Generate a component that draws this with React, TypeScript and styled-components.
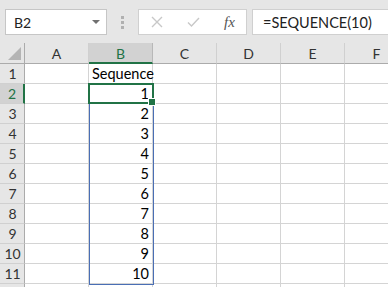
import React from 'react';
import styled, { createGlobalStyle } from 'styled-components';

const GlobalStyle = createGlobalStyle`
  html, body {
    margin: 0;
    padding: 0;
    background: #ffffff;
    overflow: hidden;
  }
  * { box-sizing: border-box; }
`;

const GREEN = '#217346';
const GRID = '#d4d4d4';

const Page = styled.div`
  width: 388px;
  height: 287px;
  font-family: Lato, "Open Sans", sans-serif;
  overflow: hidden;
`;

const Toolbar = styled.div`
  height: 43px;
  background: #e6e6e6;
  display: flex;
  align-items: flex-start;
  padding: 9px 0 0 5px;
`;

const NameBox = styled.div`
  width: 102px;
  height: 26px;
  background: #fff;
  border: 1px solid #c6c6c6;
  display: flex;
  align-items: center;
  justify-content: space-between;
  padding: 0 6px 0 8px;
  font-size: 14px;
  color: #222;
`;

const DropArrow = styled.span`
  width: 0;
  height: 0;
  border-left: 4px solid transparent;
  border-right: 4px solid transparent;
  border-top: 4px solid #707070;
`;

const Dots = styled.div`
  width: 31px;
  height: 26px;
  display: flex;
  flex-direction: column;
  align-items: center;
  justify-content: center;
  gap: 2px;

  & > span {
    width: 3px;
    height: 3px;
    background: #b0b0b0;
  }
`;

const ButtonBox = styled.div`
  width: 109px;
  height: 26px;
  background: #fff;
  border: 1px solid #d0d0d0;
  display: flex;
  align-items: center;
  padding-left: 12px;
  gap: 24px;
`;

const Fx = styled.span`
  font-family: "Liberation Serif", serif;
  font-style: italic;
  font-size: 15px;
  color: #555;
`;

const FormulaBox = styled.div`
  flex: 1;
  height: 26px;
  margin-left: 5px;
  background: #fff;
  border: 1px solid #d0d0d0;
  border-right: none;
  display: flex;
  align-items: center;
  padding-left: 10px;
  font-size: 14.5px;
  color: #222;
`;

const Sheet = styled.div`
  position: relative;
  display: grid;
  grid-template-columns: 25px repeat(6, 64px);
  grid-template-rows: 21px repeat(12, 20px);
`;

const Corner = styled.div`
  background: #e6e6e6;
  border-right: 1px solid #ababab;
  border-bottom: 1px solid #ababab;
  position: relative;

  &::after {
    content: '';
    position: absolute;
    right: 3px;
    bottom: 3px;
    width: 0;
    height: 0;
    border-left: 13px solid transparent;
    border-bottom: 13px solid #b4b4b4;
  }
`;

const ColHead = styled.div<{ $active?: boolean }>`
  background: ${p => (p.$active ? '#d2d2d2' : '#e6e6e6')};
  border-right: 1px solid ${p => (p.$active ? '#b8b8b8' : '#d0d0d0')};
  border-bottom: ${p => (p.$active ? `2px solid ${GREEN}` : '1px solid #ababab')};
  color: ${p => (p.$active ? GREEN : '#333')};
  font-size: 14px;
  display: flex;
  align-items: center;
  justify-content: center;
  padding-top: 1px;
`;

const RowHead = styled.div<{ $active?: boolean }>`
  background: ${p => (p.$active ? '#d2d2d2' : '#e6e6e6')};
  border-right: ${p => (p.$active ? `2px solid ${GREEN}` : '1px solid #ababab')};
  border-bottom: 1px solid #d0d0d0;
  color: ${p => (p.$active ? GREEN : '#333')};
  font-size: 14px;
  display: flex;
  align-items: center;
  justify-content: center;
  padding-left: 1px;
`;

const Cell = styled.div<{ $align?: 'left' | 'right' }>`
  position: relative;
  border-right: 1px solid ${GRID};
  border-bottom: 1px solid ${GRID};
  font-size: 14.5px;
  color: #000;
  display: flex;
  align-items: flex-end;
  justify-content: ${p => (p.$align === 'right' ? 'flex-end' : 'flex-start')};
  padding: 0 3px 1px 3px;
  white-space: nowrap;
`;

const ActiveFrame = styled.div`
  position: absolute;
  left: -1px;
  top: -1px;
  right: -2px;
  bottom: -1px;
  border: 2px solid ${GREEN};
  pointer-events: none;
  z-index: 3;

  &::after {
    content: '';
    position: absolute;
    right: -4px;
    bottom: -4px;
    width: 6px;
    height: 6px;
    background: ${GREEN};
    border: 1px solid #fff;
  }
`;

const RangeFrame = styled.div`
  position: absolute;
  left: 89px;
  top: 41px;
  width: 65px;
  height: 201px;
  border: 1px solid #4a6fb5;
  pointer-events: none;
  z-index: 2;
`;

const cols = ['A', 'B', 'C', 'D', 'E', 'F'];
const rows = Array.from({ length: 12 }, (_, i) => i + 1);

const cellValue = (row: number, col: string): string => {
  if (col !== 'B') return '';
  if (row === 1) return 'Sequence';
  if (row <= 11) return String(row - 1);
  return '';
};

export default function App() {
  return (
    <Page>
      <GlobalStyle />
      <Toolbar>
        <NameBox>
          <span>B2</span>
          <DropArrow />
        </NameBox>
        <Dots>
          <span />
          <span />
          <span />
        </Dots>
        <ButtonBox>
          <svg width="12" height="12" viewBox="0 0 12 12">
            <path d="M1 1 L11 11 M11 1 L1 11" stroke="#c8c8c8" strokeWidth="1.4" fill="none" />
          </svg>
          <svg width="13" height="12" viewBox="0 0 13 12">
            <path d="M1 6.5 L4.5 10 L12 2" stroke="#c8c8c8" strokeWidth="1.4" fill="none" />
          </svg>
          <Fx>fx</Fx>
        </ButtonBox>
        <FormulaBox>=SEQUENCE(10)</FormulaBox>
      </Toolbar>

      <Sheet>
        <Corner />
        {cols.map(c => (
          <ColHead key={c} $active={c === 'B'}>{c}</ColHead>
        ))}
        {rows.map(r => (
          <React.Fragment key={r}>
            <RowHead $active={r === 2}>{r <= 11 ? r : ''}</RowHead>
            {cols.map(c => {
              const v = cellValue(r, c);
              return (
                <Cell key={c} $align={r === 1 ? 'left' : 'right'}>
                  {v}
                  {r === 2 && c === 'B' && <ActiveFrame />}
                </Cell>
              );
            })}
          </React.Fragment>
        ))}
        <RangeFrame />
      </Sheet>
    </Page>
  );
}
